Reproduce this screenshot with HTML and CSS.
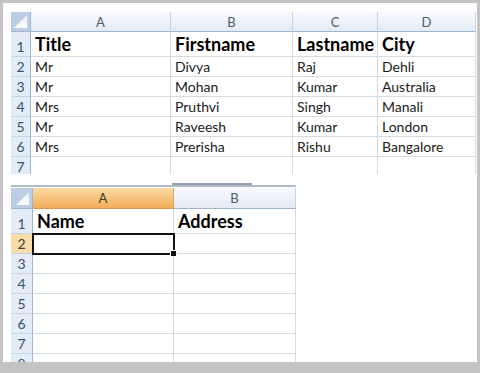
FILE: index.html
```html
<!DOCTYPE html>
<html lang="en">
<head>
  <meta charset="UTF-8">
  <title>Sheet</title>
  <link rel="stylesheet" href="styles.css">
</head>
<body>
  <div class="frame">
    <div class="sheet">
      <!-- upper pane : people list -->
      <div class="pane pane-top">
        <div class="grid cols-4">
          <div class="corner"></div>
          <div class="colhead">A</div>
          <div class="colhead">B</div>
          <div class="colhead">C</div>
          <div class="colhead">D</div>

          <div class="rowhead tall">1</div>
          <div class="cell bold tall">Title</div>
          <div class="cell bold tall">Firstname</div>
          <div class="cell bold tall">Lastname</div>
          <div class="cell bold tall">City</div>

          <div class="rowhead">2</div>
          <div class="cell">Mr</div><div class="cell">Divya</div><div class="cell">Raj</div><div class="cell">Dehli</div>
          <div class="rowhead">3</div>
          <div class="cell">Mr</div><div class="cell">Mohan</div><div class="cell">Kumar</div><div class="cell">Australia</div>
          <div class="rowhead">4</div>
          <div class="cell">Mrs</div><div class="cell">Pruthvi</div><div class="cell">Singh</div><div class="cell">Manali</div>
          <div class="rowhead">5</div>
          <div class="cell">Mr</div><div class="cell">Raveesh</div><div class="cell">Kumar</div><div class="cell">London</div>
          <div class="rowhead">6</div>
          <div class="cell">Mrs</div><div class="cell">Prerisha</div><div class="cell">Rishu</div><div class="cell">Bangalore</div>
          <div class="rowhead">7</div>
          <div class="cell"></div><div class="cell"></div><div class="cell"></div><div class="cell"></div>
        </div>
      </div>

      <div class="split"><span class="split-handle"></span></div>

      <!-- lower pane : new sheet -->
      <div class="pane pane-bottom">
        <div class="grid cols-2">
          <div class="corner"></div>
          <div class="colhead active">A</div>
          <div class="colhead">B</div>

          <div class="rowhead tall">1</div>
          <div class="cell bold tall">Name</div>
          <div class="cell bold tall">Address</div>

          <div class="rowhead active">2</div>
          <div class="cell selected"></div>
          <div class="cell"></div>

          <div class="rowhead">3</div><div class="cell"></div><div class="cell"></div>
          <div class="rowhead">4</div><div class="cell"></div><div class="cell"></div>
          <div class="rowhead">5</div><div class="cell"></div><div class="cell"></div>
          <div class="rowhead">6</div><div class="cell"></div><div class="cell"></div>
          <div class="rowhead">7</div><div class="cell"></div><div class="cell"></div>
          <div class="rowhead">8</div><div class="cell"></div><div class="cell"></div>
        </div>
      </div>
    </div>
  </div>
</body>
</html>
```

FILE: styles.css
```css
* {margin:0; padding:0; box-sizing: border-box;}
body{
  width: 480px;
  height: 373px;
  background-color: #c4c4c4;
  font-family: Lato, "Open Sans", sans-serif;
  overflow: hidden;
}
.frame{
  padding: 3px 3px 0 3px;
}
.sheet{
  height: 359px;
  background-color: #fff;
  padding: 9px 0 0 8px;
  overflow: hidden;
}
.pane{
  overflow: hidden;
}
.pane-top{
  height: 162px;
}
/* grid of cells */
.grid{
  display: grid;
  grid-auto-rows: 20px;
}
.cols-4{
  width: 465px;
  grid-template-columns: 20px 140px 122px 85px 98px;
  grid-template-rows: 20px 25px;
}
.cols-2{
  width: 285px;
  grid-template-columns: 22px 141px 122px;
  grid-template-rows: 21px 25px;
}

.corner{
  position: relative;
  background-color: #bccde5;
  border-right: 1px solid #9eb6ce;
  border-bottom: 1px solid #9eb6ce;
}
.corner::after{
  content: '';
  position: absolute;
  right: 3px;
  bottom: 3px;
  width: 13px;
  height: 13px;
  background: linear-gradient(to bottom, #e8eef7, #ffffff);
  clip-path: polygon(100% 0, 100% 100%, 0 100%);
}
.colhead{
  display: flex;
  align-items: center;
  justify-content: center;
  font-size: 13px;
  color: #4b5a70;
  background: linear-gradient(to bottom, #f8fafd, #e4eaf4);
  border-right: 1px solid #c6d3e4;
  border-bottom: 1px solid #9eb6ce;
}
.colhead.active{
  background: linear-gradient(to bottom, #fbdca6, #f3ad58);
  border-right-color: #e8a35a;
  border-bottom-color: #d89a52;
  color: #3f3a33;
}
.rowhead{
  display: flex;
  align-items: flex-end;
  justify-content: center;
  padding-bottom: 1px;
  font-size: 14px;
  color: #3c4f6b;
  background-color: #e4ecf7;
  border-right: 1px solid #9eb6ce;
  border-bottom: 1px solid #c5d3e6;
}
.rowhead.active{
  background-color: #f9dcaa;
  color: #3f3a33;
}
.cell{
  display: flex;
  align-items: flex-end;
  padding: 0 4px 1px;
  font-size: 14px;
  color: #1a1a1a;
  white-space: nowrap;
  border-right: 1px solid #d6dbe2;
  border-bottom: 1px solid #d6dbe2;
}
.bold{
  font-weight: bold;
  font-size: 18px;
  padding-bottom: 1px;
  color: #000;
}
.tall{ height: 25px; }
.cell.selected{
  position: relative;
  border: none;
  outline: 2px solid #111;
  outline-offset: -1px;
}
.cell.selected::after{
  content: '';
  position: absolute;
  right: -3px;
  bottom: -3px;
  width: 5px;
  height: 5px;
  background-color: #111;
  border: 1px solid #fff;
}
/* splitter between panes */
.split{
  position: relative;
  width: 285px;
  height: 4px;
  margin-top: 9px;
  border-bottom: 2px solid #b0bac7;
}
.split-handle{
  display: block;
  width: 80px;
  height: 2px;
  margin-left: 161px;
  background-color: #95a2b3;
}
.pane-bottom{
  margin-top: 1px;
}
```
